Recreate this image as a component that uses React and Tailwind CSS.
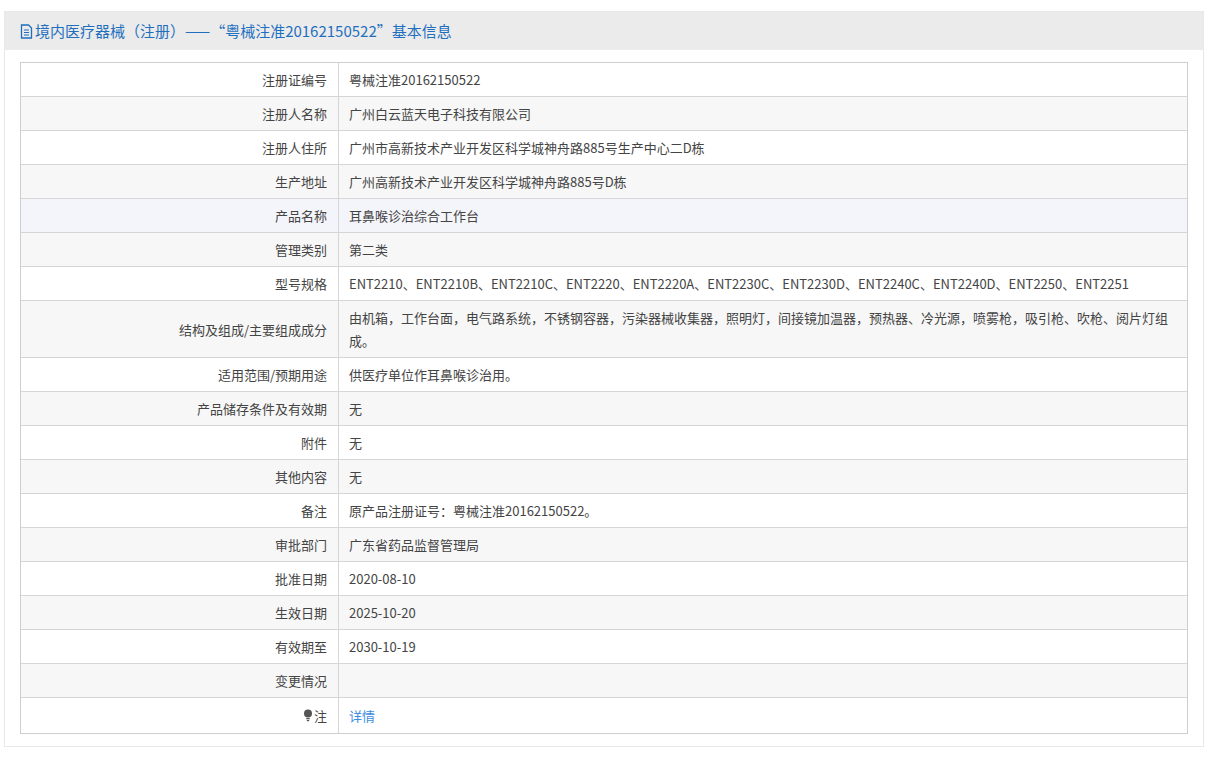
const rows = [
  ["注册证编号", "粤械注准20162150522"],
  ["注册人名称", "广州白云蓝天电子科技有限公司"],
  ["注册人住所", "广州市高新技术产业开发区科学城神舟路885号生产中心二D栋"],
  ["生产地址", "广州高新技术产业开发区科学城神舟路885号D栋"],
  ["产品名称", "耳鼻喉诊治综合工作台"],
  ["管理类别", "第二类"],
  ["型号规格", "ENT2210、ENT2210B、ENT2210C、ENT2220、ENT2220A、ENT2230C、ENT2230D、ENT2240C、ENT2240D、ENT2250、ENT2251"],
  ["结构及组成/主要组成成分", "由机箱，工作台面，电气路系统，不锈钢容器，污染器械收集器，照明灯，间接镜加温器，预热器、冷光源，喷雾枪，吸引枪、吹枪、阅片灯组成。"],
  ["适用范围/预期用途", "供医疗单位作耳鼻喉诊治用。"],
  ["产品储存条件及有效期", "无"],
  ["附件", "无"],
  ["其他内容", "无"],
  ["备注", "原产品注册证号：粤械注准20162150522。"],
  ["审批部门", "广东省药品监督管理局"],
  ["批准日期", "2020-08-10"],
  ["生效日期", "2025-10-20"],
  ["有效期至", "2030-10-19"],
  ["变更情况", ""],
];

export default function App() {
  return (
    <div className="bg-white min-h-[776px] pt-[11px] px-[4px] text-[13px] text-[#444]" style={{ fontFamily: '"Noto Sans CJK SC", sans-serif' }}>
      <div className="w-[1200px] border border-[#e8e8e8]">
        <div className="h-[38px] bg-[#ebebeb] flex items-center px-[15px] text-[15px] text-[#1f6fbf]">
          <svg width="13" height="15" viewBox="0 0 13 15" className="mr-[2px]">
            <path d="M1.5 1h7l3 3v10h-10z" fill="none" stroke="#1f6fbf" strokeWidth="1.3" />
            <path d="M4 6h5M4 8.5h5M4 11h5" stroke="#1f6fbf" strokeWidth="1.2" />
          </svg>
          境内医疗器械（注册）——“粤械注准20162150522”基本信息
        </div>
        <div className="px-[15px] pt-[12px] pb-[12px]">
          <div className="border border-[#cfcfcf]">
            {rows.map(([k, v], i) => (
              <div
                key={k}
                className={`flex border-b border-[#d6d6d6] leading-[23px] ${i === 4 ? "bg-[#f4f5fa]" : i % 2 ? "bg-[#f7f7f7]" : "bg-white"}`}
              >
                <div className="w-[318px] shrink-0 text-right pr-[11px] py-[5px] border-r border-[#d6d6d6] flex items-center justify-end">{k}</div>
                <div className="flex-1 px-[10px] py-[5px] break-all min-h-[33px]">{v}</div>
              </div>
            ))}
            <div className="flex leading-[23px] bg-white">
              <div className="w-[318px] shrink-0 pr-[11px] py-[6px] border-r border-[#d6d6d6] flex items-center justify-end">
                <svg width="10" height="13" viewBox="0 0 10 13" className="mr-[1px]">
                  <circle cx="5" cy="4.5" r="4" fill="#555" />
                  <rect x="3.3" y="9" width="3.4" height="1.3" fill="#555" />
                  <rect x="3.8" y="11" width="2.4" height="1.2" fill="#555" />
                </svg>
                注
              </div>
              <div className="flex-1 px-[10px] py-[6px] text-[#3c8de0]">详情</div>
            </div>
          </div>
        </div>
      </div>
    </div>
  );
}
